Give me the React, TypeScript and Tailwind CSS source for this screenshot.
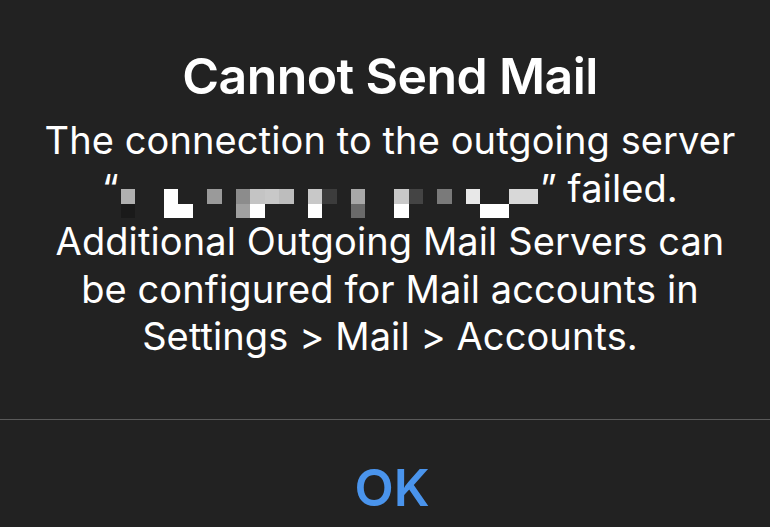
// iOS-style alert: "Cannot Send Mail"
const BG = "#222222";

// redacted server name, drawn as a 29x2 mosaic (top row, bottom row)
const mosaicTop = [
  "#b0b0b0", "", "", "#ffffff", "", "", "#9a9a9a", "", "#8c8c8c", "#c4c4c4",
  "#c8c8c8", "#bdbdbd", "", "#c8c8c8", "#3c3c3c", "", "#a8a8a8", "", "", "#c8c8c8",
  "#444444", "", "#7a7a7a", "", "#e8e8e8", "", "", "#d8d8d8", "#d8d8d8",
];
const mosaicBottom = [
  "#1a1a1a", "", "", "#ffffff", "#ffffff", "", "", "", "#a0a0a0", "#ffffff",
  "", "", "", "#ffffff", "", "", "#6a6a6a", "", "", "#ffffff",
  "", "", "", "", "", "#ffffff", "#ffffff", "", "",
];

function Mosaic() {
  return (
    <span className="inline-grid grid-cols-29 grid-rows-2 w-[417px] h-[29px] align-[-2px] mx-[2px]">
      {mosaicTop.map((c, i) => (
        <span key={"t" + i} style={{ background: c || "transparent" }} />
      ))}
      {mosaicBottom.map((c, i) => (
        <span key={"b" + i} style={{ background: c || "transparent" }} />
      ))}
    </span>
  );
}

export default function App() {
  return (
    <div
      className="w-[770px] h-[527px] flex flex-col text-white overflow-hidden"
      style={{ background: BG, fontFamily: "Inter, 'Noto Sans', sans-serif" }}
    >
      {/* Message */}
      <div className="flex flex-col items-center pt-[46px] pl-[10px] h-[419px]">
        <h1 className="text-[50px] leading-[60px] font-semibold tracking-[-0.6px]">Cannot Send Mail</h1>
        <p className="mt-[11px] text-[38px] leading-[47.5px] text-center tracking-[0.1px]">
          The connection to the outgoing server
          <br />
          “<Mosaic />” failed.
          <br />
          Additional Outgoing Mail Servers can
          <br />
          be configured for Mail accounts in
          <br />
          Settings &gt; Mail &gt; Accounts.
        </p>
      </div>

      {/* Button */}
      <div className="border-t border-[#5a5a5a] flex-1 flex items-center justify-center pt-[28px] pl-[14px]">
        <span className="text-[51px] font-semibold text-[#4a94ec] leading-none">OK</span>
      </div>
    </div>
  );
}
